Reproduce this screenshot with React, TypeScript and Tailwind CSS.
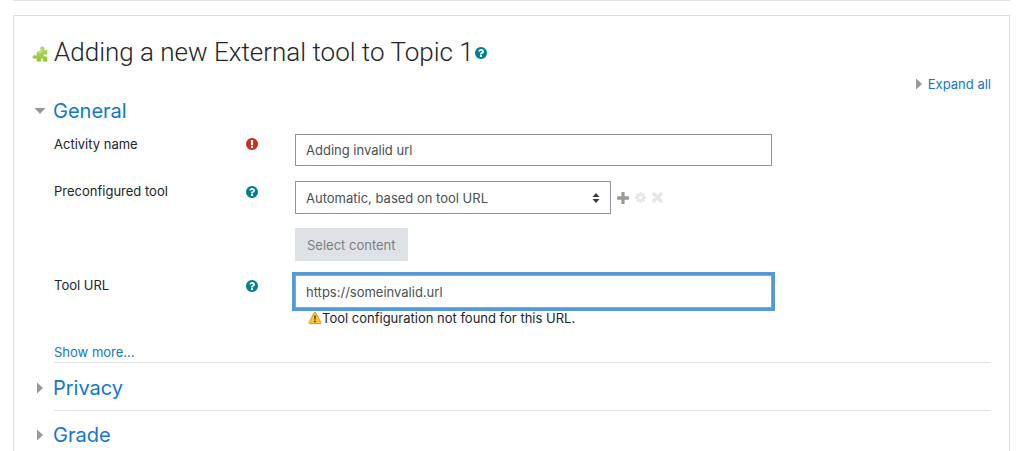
import { useState, type ReactNode } from 'react'

const paths = {
  help: 'M1024 1376v-192q0-14-9-23t-23-9h-192q-14 0-23 9t-9 23v192q0 14 9 23t23 9h192q14 0 23-9t9-23zm256-672q0-88-55.500-163t-138.500-116-170-41q-243 0-371 213-15 24 8 42l132 100q7 6 19 6 16 0 25-12 53-68 86-92 34-24 86-24 48 0 85.500 26t37.500 59q0 38-20 61t-68 45q-63 28-115.500 86.500t-52.500 125.500v36q0 14 9 23t23 9h192q14 0 23-9t9-23q0-19 21.500-49.500t54.500-49.500q32-18 49-28.500t46-35 44.500-48 28-60.500 12.500-81zm384 192q0 209-103 385.500t-279.500 279.500-385.500 103-385.500-103-279.500-279.500-103-385.500 103-385.500 279.500-279.500 385.500-103 385.500 103 279.500 279.500 103 385.500z',
  required: 'M896 128q209 0 385.500 103t279.500 279.500 103 385.500-103 385.500-279.500 279.500-385.500 103-385.500-103-279.500-279.500-103-385.500 103-385.500 279.500-279.500 385.500-103zm128 1247v-190q0-14-9-23.500t-22-9.500h-192q-13 0-23 10t-10 23v190q0 13 10 23t23 10h192q13 0 22-9.500t9-23.500zm-2-344l18-621q0-12-10-18-10-8-24-8h-220q-14 0-24 8-10 6-10 18l17 621q0 10 10 17.500t24 7.500h185q14 0 23.500-7.500t10.500-17.500z',
  plus: 'M1600 736v192q0 40-28 68t-68 28h-416v416q0 40-28 68t-68 28h-192q-40 0-68-28t-28-68v-416h-416q-40 0-68-28t-28-68v-192q0-40 28-68t68-28h416v-416q0-40 28-68t68-28h192q40 0 68 28t28 68v416h416q40 0 68 28t28 68z',
  cog: 'M1024 896q0-106-75-181t-181-75-181 75-75 181 75 181 181 75 181-75 75-181zm512-109v222q0 12-8 23t-20 13l-185 28q-19 54-39 91 35 50 107 138 10 12 10 25t-9 23q-27 37-99 108t-94 71q-12 0-26-9l-138-108q-44 23-91 38-16 136-29 186-7 28-36 28h-222q-14 0-24.500-8.500t-11.500-21.500l-28-184q-49-16-90-37l-141 107q-10 9-25 9-14 0-25-11-126-114-165-168-7-10-7-23 0-12 8-23 15-21 51-66.500t54-70.500q-27-50-41-99l-183-27q-13-2-21-12.500t-8-23.500v-222q0-12 8-23t19-13l186-28q14-46 39-92-40-57-107-138-10-12-10-24 0-10 9-23 26-36 98.500-107.500t94.500-71.500q13 0 26 10l138 107q44-23 91-38 16-136 29-186 7-28 36-28h222q14 0 24.500 8.500t11.500 21.500l28 184q49 16 90 37l142-107q9-9 24-9 13 0 25 10 129 119 165 170 7 8 7 22 0 12-8 23-15 21-51 66.500t-54 70.500q26 50 41 98l183 28q13 2 21 12.500t8 23.500z',
  times: 'M1490 1322q0 40-28 68l-136 136q-28 28-68 28t-68-28l-294-294-294 294q-28 28-68 28t-68-28l-136-136q-28-28-28-68t28-68l294-294-294-294q-28-28-28-68t28-68l136-136q28-28 68-28t68 28l294 294 294-294q28-28 68-28t68 28l136 136q28 28 28 68t-28 68l-294 294 294 294q28 28 28 68z',
}

function Icon({ name, viewBox = '0 0 1792 1792', className }: { name: keyof typeof paths; viewBox?: string; className: string }) {
  return (
    <svg viewBox={viewBox} fill="currentColor" aria-hidden="true" className={`block shrink-0 ${className}`}>
      <path d={paths[name]} />
    </svg>
  )
}

function Help({ label }: { label: string }) {
  return (
    <button type="button" aria-label={label} className="pt-0.5 text-[#008196]">
      <Icon name="help" className="size-3.5" />
    </button>
  )
}

function Caret({ open = false }: { open?: boolean }) {
  return open ? (
    <svg viewBox="0 0 12 6" className="block h-1.5 w-3 shrink-0" aria-hidden="true">
      <path d="M.5 0h11L6 6z" fill="#999" />
    </svg>
  ) : (
    <svg viewBox="0 0 6 12" className="block h-3 w-1.5 shrink-0" aria-hidden="true">
      <path d="M0 .5v11L6 6z" fill="#999" />
    </svg>
  )
}

function Puzzle() {
  return (
    <svg viewBox="0 0 16 16" className="block size-4 shrink-0" aria-hidden="true">
      <defs>
        <linearGradient id="puzzle" x1="0" y1="0" x2="0" y2="1">
          <stop offset="0" stopColor="#b4dc62" />
          <stop offset="1" stopColor="#8dc630" />
        </linearGradient>
      </defs>
      <path
        d="M5 6.200l3.300-.9c.9-.3.9-.9.500-1.600C8.200 2.300 8.800.800 10.300.800s2.100 1.300 1.700 2.600c-.2.900.1 1.300 1 1.200l2-.3v3.200c-.2.900-.8 1-1.500.7-1.200-.4-2 .3-2 1.300s.9 1.600 2 1.200c.8-.3 1.400-.1 1.500.8v3.800h-3.400c-.7-.2-.6-.8-.4-1.400.3-1-.3-1.700-1.200-1.700s-1.500.8-1.100 1.700c.3.700.2 1.200-.5 1.400H5v-2.400c-.1-.8-.6-.9-1.200-.7C2.300 12.700.8 12.300.8 11s1.300-1.900 2.700-1.500c1 .3 1.500.1 1.500-.8z"
        fill="url(#puzzle)"
        stroke="#9ccc4c"
        strokeWidth=".6"
      />
      <path d="M6 7l3-.8c1.300-.5 1.300-1.500.8-2.700" fill="none" stroke="#d3ef9a" strokeWidth=".7" />
    </svg>
  )
}

function Warning() {
  return (
    <svg viewBox="0 0 14 14" className="block size-3.5 shrink-0" aria-hidden="true">
      <path d="M7 1.300c.5 0 .8.300 1 .7l4.800 9.400c.3.800 0 1.300-.8 1.300H2c-.8 0-1.100-.5-.8-1.300L6 2c.2-.4.5-.7 1-.7z" fill="#fcc331" stroke="#dd8d1c" strokeWidth=".9" />
      <path d="M6.200 4.500h1.600L7.500 8.800h-1z" fill="#3b3022" />
      <circle cx="7" cy="10.500" r=".9" fill="#3b3022" />
    </svg>
  )
}

function Row({ label, htmlFor, icon, children }: { label: string; htmlFor: string; icon: ReactNode; children: ReactNode }) {
  return (
    <div className="flex">
      <div className="flex h-5 w-[241px] shrink-0 items-center justify-between pr-9">
        <label htmlFor={htmlFor}>{label}</label>
        {icon}
      </div>
      <div className="min-w-0 flex-1">{children}</div>
    </div>
  )
}

function Section({ title, open, onToggle }: { title: string; open: boolean; onToggle: () => void }) {
  return (
    <h3 className="flex h-8 items-center text-xl text-[#1177d1]">
      <button type="button" aria-expanded={open} onClick={onToggle} className="flex items-center">
        <span className="flex w-[21px] justify-center pr-1.5">
          <Caret open={open} />
        </span>
        {title}
      </button>
    </h3>
  )
}

export default function App() {
  const [name, setName] = useState('Adding invalid url')
  const [url, setUrl] = useState('https://someinvalid.url')
  const [open, setOpen] = useState<Record<string, boolean>>({ General: true })

  const toggle = (key: string) => setOpen(prev => ({ ...prev, [key]: !prev[key] }))

  return (
    <div className="h-screen overflow-hidden bg-white pr-2.5 pl-[13px] font-[Inter,sans-serif] text-[13px] leading-5 text-[#212529]">
      <div className="border-t border-[#dee2e6]" />
      <main className="mt-3.5 border border-b-0 border-[#dedede] px-[18px] pt-4 pb-8">
        <h2 className="flex h-10 items-center font-[Roboto,sans-serif] text-[26px] font-light whitespace-nowrap">
          <span className="w-[22px] shrink-0 pt-1">
            <Puzzle />
          </span>
          Adding a new External tool to Topic 1
          <Help label="Help with External tool" />
        </h2>

        <div className="mt-0.5 flex justify-end">
          <a href="#expand" className="flex items-center gap-1.5 text-[#1177d1]">
            <Caret />
            Expand all
          </a>
        </div>

        <form onSubmit={e => e.preventDefault()} className="pt-px">
          <Section title="General" open={!!open.General} onToggle={() => toggle('General')} />

          {open.General && (
            <div className="flex flex-col pt-[7px] pl-[22px]">
              <Row label="Activity name" htmlFor="name" icon={<Icon name="required" className="size-3.5 text-[#ca3120]" />}>
                <input
                  id="name"
                  value={name}
                  onChange={e => setName(e.target.value)}
                  className="block h-8 w-[477px] max-w-full border border-[#8f959e] px-2.5 text-[#495057] outline-none"
                />
              </Row>

              <div className="mt-[15px]">
                <Row label="Preconfigured tool" htmlFor="tool" icon={<Help label="Help with Preconfigured tool" />}>
                  <div className="flex items-center gap-1.5">
                    <div className="relative w-[316px]">
                      <select id="tool" className="block h-[33px] w-full appearance-none border border-[#8f959e] bg-white px-2.5 text-[#495057]">
                        <option>Automatic, based on tool URL</option>
                      </select>
                      <svg viewBox="0 0 8 10" className="pointer-events-none absolute top-3 right-[11px] h-2.5 w-2" aria-hidden="true">
                        <path d="M4 0l3.500 4h-7zM4 10L.5 6h7z" fill="#343a40" />
                      </svg>
                    </div>
                    <button type="button" aria-label="Add preconfigured tool" className="text-[#999]">
                      <Icon name="plus" viewBox="192 128 1408 1408" className="size-3" />
                    </button>
                    <button type="button" aria-label="Edit preconfigured tool" disabled className="text-[#e6e6e6]">
                      <Icon name="cog" viewBox="0 128 1536 1536" className="size-[11px]" />
                    </button>
                    <button type="button" aria-label="Delete preconfigured tool" disabled className="text-[#e6e6e6]">
                      <Icon name="times" viewBox="302 366 1188 1188" className="size-[11px]" />
                    </button>
                  </div>
                  <button type="button" disabled className="mt-3.5 block h-[33px] bg-[#dee2e6] px-3 text-[#7a7f84]">
                    Select content
                  </button>
                </Row>
              </div>

              <div className="mt-3.5">
                <Row label="Tool URL" htmlFor="url" icon={<Help label="Help with Tool URL" />}>
                  <input
                    id="url"
                    value={url}
                    onChange={e => setUrl(e.target.value)}
                    className="block h-[33px] w-[477px] max-w-full border border-[#66afe9] px-2.5 text-[#495057] ring-3 ring-[#5499d8] outline-none"
                  />
                  <p className="flex items-center pl-[13px]">
                    <Warning />
                    Tool configuration not found for this URL.
                  </p>
                </Row>
              </div>

              <div className="mt-3.5 border-b border-[#dee2e6]">
                <a href="#more" className="text-[#1177d1]">
                  Show more...
                </a>
              </div>
            </div>
          )}

          <div className="pt-[9px]">
            <Section title="Privacy" open={!!open.Privacy} onToggle={() => toggle('Privacy')} />
            <div className="mt-1.5 ml-[22px] border-b border-[#dee2e6]" />
          </div>
          <div className="pt-2">
            <Section title="Grade" open={!!open.Grade} onToggle={() => toggle('Grade')} />
          </div>
        </form>
      </main>
    </div>
  )
}
